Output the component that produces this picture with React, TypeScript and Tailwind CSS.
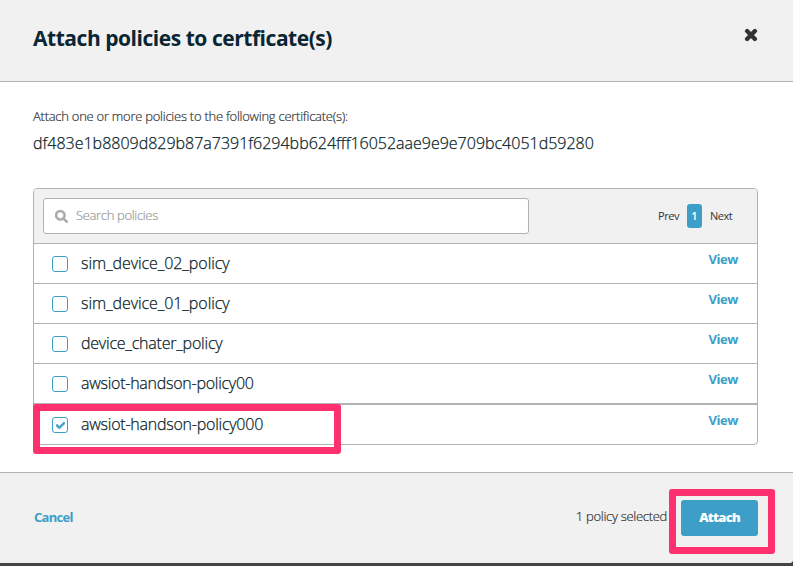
import { FaCheck, FaSearch, FaTimes } from "react-icons/fa";

const policies = [
  { name: "sim_device_02_policy", checked: false, track: "tracking-[-0.07px]", row: "h-10 border-b" },
  { name: "sim_device_01_policy", checked: false, track: "tracking-[-0.07px]", row: "h-10 border-b" },
  { name: "device_chater_policy", checked: false, track: "tracking-[-0.22px]", row: "h-10 border-b" },
  { name: "awsiot-handson-policy00", checked: false, track: "tracking-[-0.26px]", row: "h-[41px] border-b-2" },
  { name: "awsiot-handson-policy000", checked: true, track: "tracking-[-0.24px]", row: "h-[39px]" },
];

export default function App() {
  return (
    <div className="flex h-[566px] w-[793px] flex-col overflow-hidden bg-[#444] font-['Open_Sans',sans-serif] text-[#0a1f2b]">
      <div className="relative flex h-[563px] flex-col rounded-br bg-white">
        <header className="flex h-[82px] shrink-0 items-start justify-between border-b border-[#b2b5b6] bg-[#f1f1f1] pr-[34px] pl-[33px]">
          <h1 className="mt-[23px] text-[21px] leading-[30px] font-bold tracking-[-0.46px] whitespace-nowrap text-[#0a2533]">
            <span>Attach policies to certficate(s)</span>
          </h1>
          <button aria-label="Close" className="mt-[27px] text-[#333]">
            <FaTimes size={16} stroke="currentColor" strokeWidth={44} />
          </button>
        </header>

        <main className="flex h-[390px] shrink-0 flex-col px-[33px]">
          <p className="mt-[24px] h-5 text-[13px] leading-5 font-light tracking-[-0.26px] whitespace-nowrap text-[#333] [-webkit-text-stroke:0.2px_currentColor]">
            <span>Attach one or more policies to the following certificate(s):</span>
          </p>
          <p className="mt-[5px] h-6 text-[16px] leading-6 font-light tracking-[-0.005px] whitespace-nowrap [-webkit-text-stroke:0.25px_currentColor]">
            <span>df483e1b8809d829b87a7391f6294bb624fff16052aae9e9e709bc4051d59280</span>
          </p>

          <section className="mt-[33px] w-[725px] rounded border border-[#b2b2b2]">
            <div className="flex h-[55px] items-center rounded-t-[3px] border-b border-[#b2b2b2] bg-[#f1f1f1] pl-[9px]">
              <div className="flex h-9 w-[486px] items-center rounded-[3px] border border-[#b2b2b2] bg-white pl-[11px]">
                <FaSearch size={13} className="text-[#aaa]" stroke="currentColor" strokeWidth={20} />
                <span className="ml-[8px] text-[13px] font-light tracking-[-0.34px] text-[#999] [-webkit-text-stroke:0.2px_currentColor]">Search policies</span>
              </div>
              <div className="ml-[129px] flex items-center text-[11px] text-[#333]">
                <span className="w-[21px] tracking-[-0.4px] whitespace-nowrap">Prev</span>
                <span className="ml-2 flex h-6 w-[15px] items-center justify-center rounded-[3px] bg-[#3d9fc8] font-semibold text-white">1</span>
                <span className="ml-2 whitespace-nowrap tracking-[-0.5px]">Next</span>
              </div>
            </div>
            {policies.map((p) => (
              <div key={p.name} className={`flex items-start justify-between border-[#b2b2b2] pr-[19px] pl-[18px] ${p.row}`}>
                <div className="flex items-start">
                  <span className="mt-3 flex h-4 w-4 items-center justify-center rounded-[3px] border border-[#3d9fc8] bg-white text-[#3d9fc8]">
                    {p.checked && <FaCheck size={9} stroke="currentColor" strokeWidth={50} />}
                  </span>
                  <span className={`mt-[7px] ml-[13px] text-[16px] leading-6 font-light whitespace-nowrap [-webkit-text-stroke:0.25px_currentColor] ${p.track}`}>{p.name}</span>
                </div>
                <a className="mt-[5px] text-[13px] leading-5 font-bold tracking-[-0.4px] text-[#3d9fc8]">View</a>
              </div>
            ))}
          </section>
        </main>

        <footer className="flex h-[91px] shrink-0 items-start justify-between rounded-br border-t border-[#b2b2b2] bg-[#f1f1f1] pr-[35px] pl-[34px]">
          <a className="mt-[34px] text-[13px] leading-5 font-bold tracking-[-0.7px] text-[#3d9fc8]">Cancel</a>
          <div className="flex items-start">
            <span className="mt-[33px] mr-[14px] text-[13px] leading-5 font-light tracking-[-0.3px] text-[#333] [-webkit-text-stroke:0.2px_currentColor]">1 policy selected</span>
            <button className="mt-[27px] h-9 w-[77px] rounded-[3px] bg-[#3d9fc8] text-[13px] font-extrabold tracking-[-0.75px] text-white">Attach</button>
          </div>
        </footer>
        <div className="pointer-events-none absolute top-[404px] left-[33px] h-[50px] w-[308px] rounded-[3px] border-[7px] border-[#ff306e]" />
        <div className="pointer-events-none absolute top-[489px] left-[669px] h-[65px] w-[106px] rounded-[3px] border-[7px] border-[#ff306e]" />
      </div>
    </div>
  );
}
